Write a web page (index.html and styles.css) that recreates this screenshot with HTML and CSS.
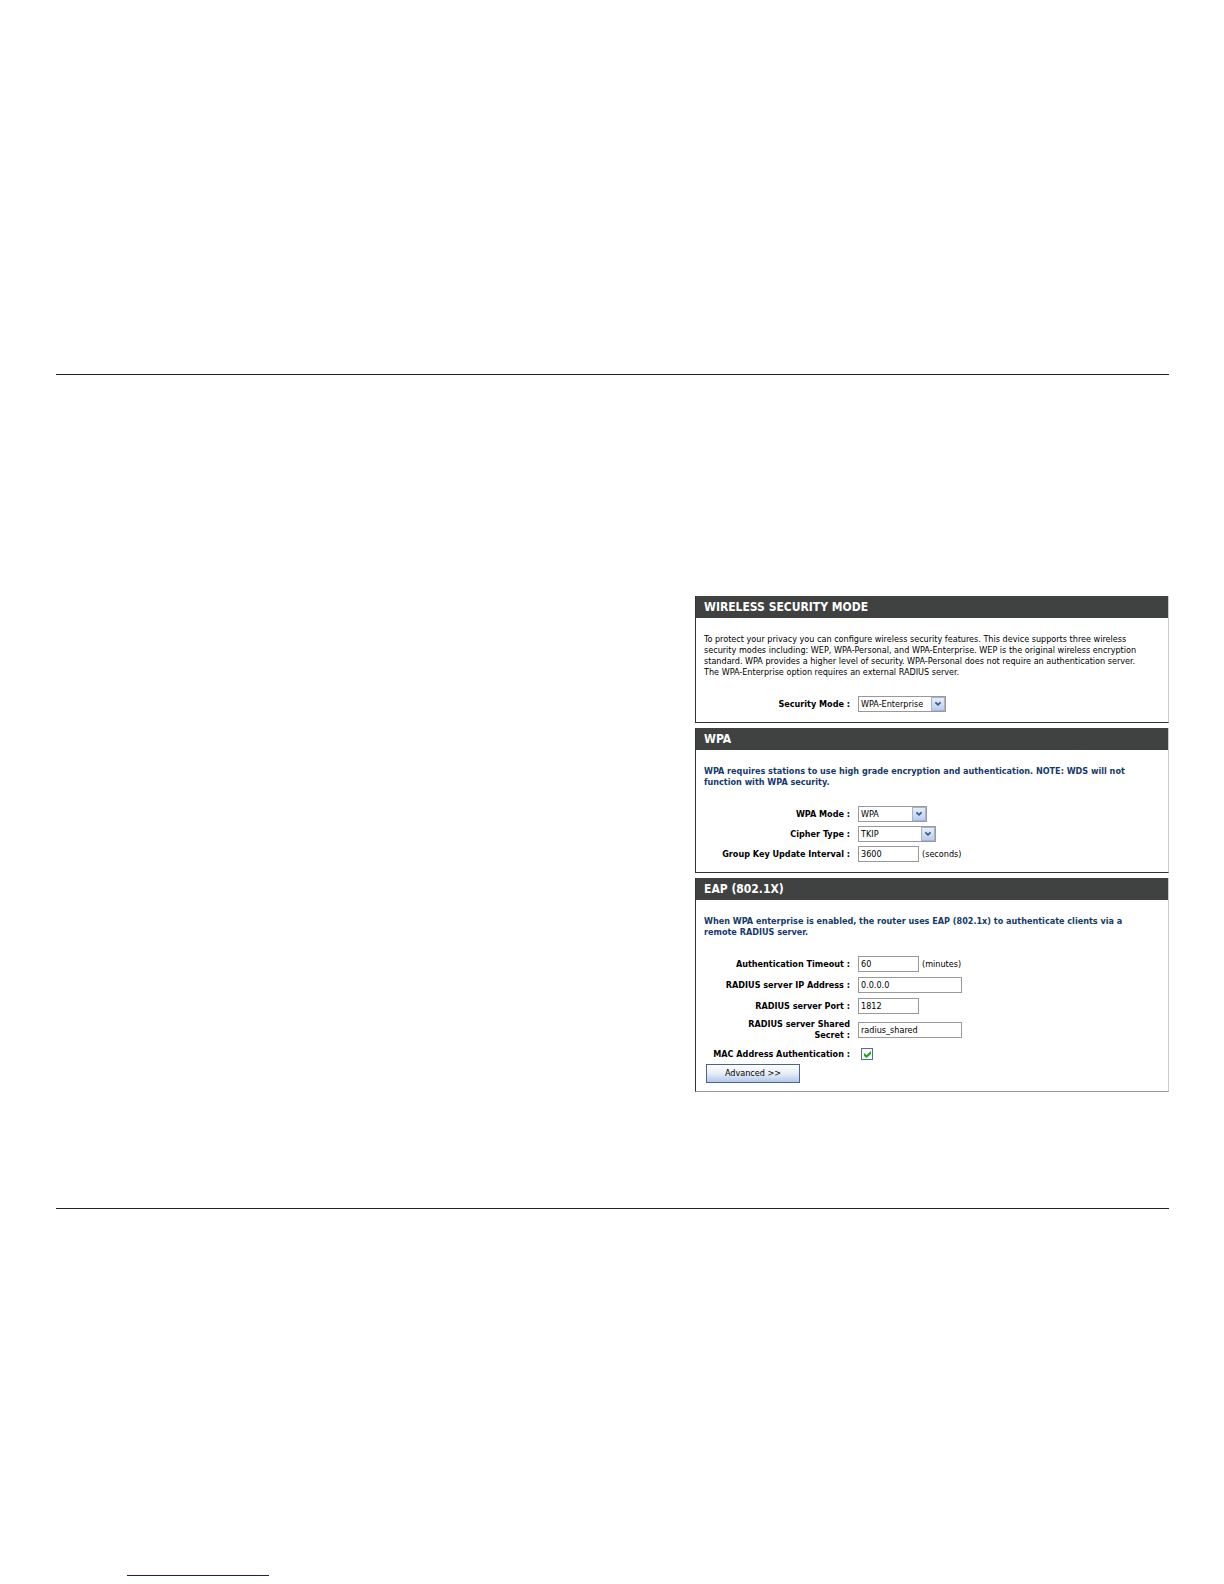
FILE: index.html
```html
<!DOCTYPE html>
<html lang="en">
<head>
    <meta charset="UTF-8">
    <meta name="viewport" content="width=device-width, initial-scale=1.0">
    <title>Wireless Security Mode</title>
    <link rel="stylesheet" href="styles.css">
</head>
<body>
    <main class="page">
        <form class="settings">
            <section class="panel">
                <h2>WIRELESS SECURITY MODE</h2>
                <div class="panel-body">
                    <p>To protect your privacy you can configure wireless security features. This device supports three wireless<br>
                    security modes including: WEP, WPA-Personal, and WPA-Enterprise. WEP is the original wireless encryption<br>
                    standard. WPA provides a higher level of security. WPA-Personal does not require an authentication server.<br>
                    The WPA-Enterprise option requires an external RADIUS server.</p>
                    <div class="row">
                        <label for="security-mode">Security Mode :</label>
                        <span class="select-box select-large">
                            <select id="security-mode" name="security-mode">
                                <option>WPA-Enterprise</option>
                            </select>
                            <svg viewBox="0 0 14 14"><path d="M4 5l3 3 3-3" /></svg>
                        </span>
                    </div>
                </div>
            </section>

            <section class="panel">
                <h2>WPA</h2>
                <div class="panel-body">
                    <p class="note">WPA requires stations to use high grade encryption and authentication. NOTE: WDS will not<br>
                    function with WPA security.</p>
                    <div class="row">
                        <label for="wpa-mode">WPA Mode :</label>
                        <span class="select-box select-small">
                            <select id="wpa-mode" name="wpa-mode">
                                <option>WPA</option>
                            </select>
                            <svg viewBox="0 0 14 14"><path d="M4 5l3 3 3-3" /></svg>
                        </span>
                    </div>
                    <div class="row">
                        <label for="cipher-type">Cipher Type :</label>
                        <span class="select-box select-medium">
                            <select id="cipher-type" name="cipher-type">
                                <option>TKIP</option>
                            </select>
                            <svg viewBox="0 0 14 14"><path d="M4 5l3 3 3-3" /></svg>
                        </span>
                    </div>
                    <div class="row">
                        <label for="key-interval">Group Key Update Interval :</label>
                        <input type="text" class="short" id="key-interval" name="key-interval" value="3600">
                        <span class="unit">(seconds)</span>
                    </div>
                </div>
            </section>

            <section class="panel panel-eap">
                <h2>EAP (802.1X)</h2>
                <div class="panel-body">
                    <p class="note">When WPA enterprise is enabled, the router uses EAP (802.1x) to authenticate clients via a<br>
                    remote RADIUS server.</p>
                    <div class="row">
                        <label for="auth-timeout">Authentication Timeout :</label>
                        <input type="text" class="short" id="auth-timeout" name="auth-timeout" value="60">
                        <span class="unit">(minutes)</span>
                    </div>
                    <div class="row">
                        <label for="radius-ip">RADIUS server IP Address :</label>
                        <input type="text" class="long" id="radius-ip" name="radius-ip" value="0.0.0.0">
                    </div>
                    <div class="row">
                        <label for="radius-port">RADIUS server Port :</label>
                        <input type="text" class="short" id="radius-port" name="radius-port" value="1812">
                    </div>
                    <div class="row">
                        <label for="radius-secret">RADIUS server Shared<br>Secret :</label>
                        <input type="text" class="long" id="radius-secret" name="radius-secret" value="radius_shared">
                    </div>
                    <div class="row">
                        <label for="mac-auth">MAC Address Authentication :</label>
                        <input type="checkbox" id="mac-auth" name="mac-auth" checked>
                    </div>
                    <button type="button" class="advanced-btn">Advanced &gt;&gt;</button>
                </div>
            </section>
        </form>
    </main>
    <footer>
        <div class="footer-line"></div>
    </footer>
</body>
</html>
```
FILE: styles.css
```css
* {
    box-sizing: border-box;
}
body {
    margin: 0;
    background: white;
    color: #000;
    font-family: "DejaVu Sans Condensed", "DejaVu Sans", sans-serif;
    font-size: 9px;
    line-height: 11px;
}
.page {
    margin: 374px 55px 0 56px;
    padding: 221px 0 116px;
    border-top: 1px solid #222;
    border-bottom: 1px solid #222;
}
.settings {
    display: flex;
    flex-direction: column;
    gap: 5px;
    max-width: 474px;
    margin-left: auto;
}
.panel {
    border: 1px solid #333;
    border-top: none;
    border-right-color: #ccc;
}
.panel-eap {
    border-bottom-color: #999;
}
h2 {
    margin: 0;
    padding: 0 8px;
    background: #404241;
    color: white;
    font-size: 12px;
    line-height: 22px;
}
.panel-body {
    padding: 16px 8px 10px;
}
.panel-eap .panel-body {
    padding-bottom: 8px;
}
p {
    margin: 0 0 18px;
    white-space: nowrap;
}
.note {
    color: #153a6b;
    font-weight: bold;
}
.row {
    display: flex;
    align-items: center;
    min-height: 16px;
}
.row + .row {
    margin-top: 4px;
}
.panel-eap .row + .row {
    margin-top: 5px;
}
label {
    width: 146px;
    margin-right: 8px;
    text-align: right;
    font-weight: bold;
    white-space: nowrap;
}
input[type="text"], select {
    height: 16px;
    margin: 0;
    padding: 0 2px;
    border: 1px solid #999;
    border-radius: 0;
    background: white;
    color: #000;
    font: inherit;
}
.short {
    width: 61px;
}
.long {
    width: 104px;
}
.unit {
    margin-left: 3px;
}
.select-box {
    position: relative;
    height: 16px;
}
.select-box select {
    display: block;
    width: 100%;
    appearance: none;
}
.select-box svg {
    position: absolute;
    top: 1px;
    right: 1px;
    width: 14px;
    height: 14px;
    border: 1px solid #a3b4cf;
    background: linear-gradient(#e4eefb, #b7cdef);
    fill: none;
    stroke: #40587c;
    stroke-width: 2;
    pointer-events: none;
}
.select-large {
    width: 88px;
}
.select-medium {
    width: 78px;
}
.select-small {
    width: 69px;
}
input[type="checkbox"] {
    position: relative;
    width: 12px;
    height: 12px;
    margin: 0 3px;
    border: 1px solid #54708f;
    background: #f6f8f6;
    appearance: none;
}
input[type="checkbox"]:checked::after {
    content: "";
    position: absolute;
    top: 2px;
    left: 2px;
    width: 7px;
    height: 7px;
    background: #2ba32b;
    clip-path: polygon(0 29%, 36% 57%, 100% 0, 100% 43%, 36% 100%, 0 71%);
}
.advanced-btn {
    display: block;
    width: 94px;
    height: 19px;
    margin: 2px 2px 0;
    padding: 0;
    border: 1px solid #48658f;
    background: linear-gradient(#fff, #e6edf8 50%, #b4c8e8);
    color: #000;
    font: inherit;
}
footer {
    padding: 366px 56px 8px;
}
.footer-line {
    width: 142px;
    margin-left: 71px;
    border-top: 1px solid #1a1a8c;
}
```
